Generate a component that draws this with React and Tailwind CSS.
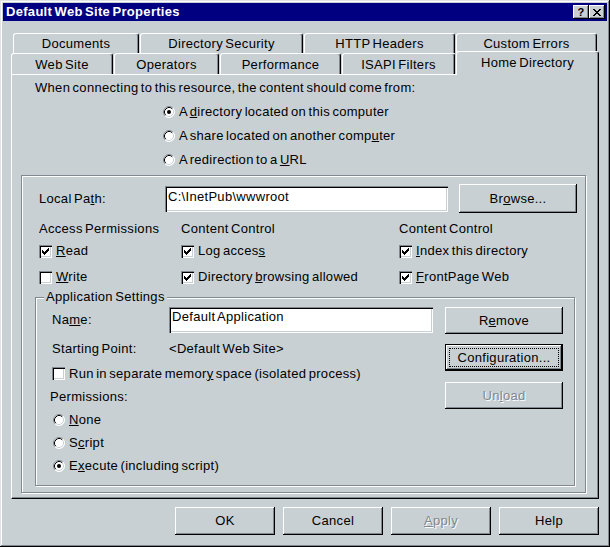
import React from "react";

// classic 3D edges
const raised = "shadow-[inset_-1px_-1px_#000,inset_1px_1px_#fff,inset_-2px_-2px_#808890]";
const sunken =
  "shadow-[inset_1px_1px_#808890,inset_2px_2px_#000,inset_-1px_-1px_#fff,inset_-2px_-2px_#c8d0d4]";
const etched = "border border-[#808890] shadow-[inset_1px_1px_#fff,1px_1px_#fff]";

const topTabs = [
  { label: "Documents", w: "w-[126px]" },
  { label: "Directory Security", w: "w-[163px]" },
  { label: "HTTP Headers", w: "w-[151px]" },
  { label: "Custom Errors", w: "w-[141px]" },
];

const bottomTabs = [
  { label: "Web Site", w: "w-[102px]" },
  { label: "Operators", w: "w-[105px]" },
  { label: "Performance", w: "w-[121px]" },
  { label: "ISAPI Filters", w: "w-[113px]" },
];

const tabEdge =
  "shrink-0 rounded-t-[3px] border-l border-t border-r border-l-white border-t-white border-r-black bg-[#c8d0d4] text-center shadow-[inset_-1px_0_#808890]";

function Button({ children, w = "w-[118px]", h = "h-[27px]", extra = "", disabled, isDefault }) {
  return (
    <div
      className={`relative flex shrink-0 items-center justify-center ${w} ${h} ${extra} ${
        isDefault ? "border border-black" : ""
      } ${raised} ${disabled ? "text-[#808890] [text-shadow:1px_1px_#fff]" : "text-black"}`}
    >
      {isDefault && (
        <span className="pointer-events-none absolute inset-[3px] border border-dotted border-black" />
      )}
      <span>{children}</span>
    </div>
  );
}

function Check({ checked }) {
  return (
    <span className={`flex h-[13px] w-[13px] shrink-0 items-center justify-center bg-white ${sunken}`}>
      {checked && (
        <svg width="7" height="7" viewBox="0 0 7 7" shapeRendering="crispEdges">
          <path
            d="M6 0h1v1h-1z M5 1h2v1h-2z M0 2h1v1h-1z M4 2h3v1h-3z M0 3h2v1h-2z M3 3h3v1h-3z M0 4h5v1h-5z M1 5h3v1h-3z M2 6h1v1h-1z"
            fill="#000"
          />
        </svg>
      )}
    </span>
  );
}

function Radio({ checked }) {
  return (
    <svg width="12" height="12" viewBox="0 0 12 12" className="shrink-0">
      <circle cx="6" cy="6" r="5.5" fill="#fff" />
      <path d="M2.11 9.89A5.5 5.5 0 0 1 9.89 2.11" fill="none" stroke="#808890" />
      <path d="M9.89 2.11A5.5 5.5 0 0 1 2.11 9.89" fill="none" stroke="#fff" />
      <path d="M2.82 9.18A4.5 4.5 0 0 1 9.18 2.82" fill="none" stroke="#000" />
      <path d="M9.18 2.82A4.5 4.5 0 0 1 2.82 9.18" fill="none" stroke="#c8d0d4" />
      {checked && <circle cx="6" cy="6" r="2" fill="#000" />}
    </svg>
  );
}

function RadioRow({ h, checked, children }) {
  return (
    <div className={`flex items-center gap-[4px] ${h}`}>
      <Radio checked={checked} />
      <span>{children}</span>
    </div>
  );
}

function CheckRow({ checked, children }) {
  return (
    <div className="flex items-center gap-[4px]">
      <Check checked={checked} />
      <span>{children}</span>
    </div>
  );
}

function TitleBtn({ children }) {
  return (
    <div className={`flex h-[14px] w-[16px] items-center justify-center bg-[#c8d0d4] ${raised}`}>
      {children}
    </div>
  );
}

export default function App() {
  return (
    <div className="h-[547px] w-[610px] bg-[#c8d0d4] p-[3px] font-['Liberation_Sans',Arial,sans-serif] text-[13px] leading-[16px] tracking-[0.3px] text-black [word-spacing:-1.5px] shadow-[inset_-1px_-1px_#000,inset_1px_1px_#dfe3e6,inset_-2px_-2px_#808890,inset_2px_2px_#fff]">
      {/* Title bar */}
      <div className="flex h-[18px] items-center justify-between bg-[#000080] pl-[3px] pr-[2px]">
        <span className="font-bold text-white">Default Web Site Properties</span>
        <div className="flex">
          <TitleBtn>
            <span className="text-[11px] font-bold leading-none">?</span>
          </TitleBtn>
          <TitleBtn>
            <svg width="8" height="7" viewBox="0 0 8 7" shapeRendering="crispEdges">
              <path
                d="M0 0h2v1h-2z M6 0h2v1h-2z M1 1h2v1h-2z M5 1h2v1h-2z M2 2h4v1h-4z M3 3h2v1h-2z M2 4h4v1h-4z M1 5h2v1h-2z M5 5h2v1h-2z M0 6h2v1h-2z M6 6h2v1h-2z"
                fill="#000"
              />
            </svg>
          </TitleBtn>
        </div>
      </div>

      <div className="mx-[8px] mt-[12px]">
        {/* Tab rows */}
        <div className="flex h-[20px] gap-[1px] pl-[2px]">
          {topTabs.map((t) => (
            <div key={t.label} className={`${tabEdge} ${t.w} h-[20px] pt-[2px]`}>
              {t.label}
            </div>
          ))}
        </div>
        <div className="flex h-[21px] items-end gap-[1px]">
          {bottomTabs.map((t) => (
            <div key={t.label} className={`${tabEdge} ${t.w} h-[21px] pt-[3px]`}>
              {t.label}
            </div>
          ))}
          <div className={`${tabEdge} relative z-10 -mb-[1px] h-[24px] w-[143px] pt-[3px]`}>
            Home Directory
          </div>
        </div>

        {/* Tab panel */}
        <div className="h-[425px] border-b border-l border-r border-t border-b-black border-l-white border-r-black border-t-white pt-[5px] shadow-[inset_-1px_-1px_#808890]">
          <p className="pl-[23px]">When connecting to this resource, the content should come from:</p>
          <div className="mt-[4px] pl-[151px]">
            <RadioRow h="h-[24px]" checked>
              A <u>d</u>irectory located on this computer
            </RadioRow>
            <RadioRow h="h-[24px]">
              A share located on another comp<u>u</u>ter
            </RadioRow>
            <RadioRow h="h-[24px]">
              A redirection to a <u>U</u>RL
            </RadioRow>
          </div>

          <div className={`ml-[9px] mt-[3px] h-[318px] w-[565px] ${etched}`}>
            <div className="mt-[8px] flex h-[29px] items-center pl-[17px]">
              <span className="w-[126px] shrink-0">
                Local Pa<u>t</u>h:
              </span>
              <div className={`h-[26px] w-[283px] shrink-0 bg-white pl-[3px] pt-[3px] ${sunken}`}>
                C:\InetPub\wwwroot
              </div>
              <Button h="h-[29px]" extra="ml-[11px]">
                Br<u>o</u>wse...
              </Button>
            </div>

            <div className="mt-[7px] grid grid-cols-[142px_218px_1fr] grid-rows-[18px_26px_26px] items-center pl-[17px]">
              <span>Access Permissions</span>
              <span>Content Control</span>
              <span>Content Control</span>
              <CheckRow checked>
                <u>R</u>ead
              </CheckRow>
              <CheckRow checked>
                Log acces<u>s</u>
              </CheckRow>
              <CheckRow checked>
                <u>I</u>ndex this directory
              </CheckRow>
              <CheckRow>
                <u>W</u>rite
              </CheckRow>
              <CheckRow checked>
                Directory <u>b</u>rowsing allowed
              </CheckRow>
              <CheckRow checked>
                <u>F</u>rontPage Web
              </CheckRow>
            </div>

            {/* Application Settings group */}
            <div className={`relative ml-[13px] mt-[7px] h-[189px] w-[540px] ${etched}`}>
              <span className="absolute left-[8px] top-[-9px] bg-[#c8d0d4] px-[2px]">Application Settings</span>
              <div className="flex pl-[16px] pt-[9px]">
                <div className="flex w-[381px] flex-col">
                  <div className="flex h-[26px] items-center">
                    <span className="w-[117px] shrink-0">
                      Na<u>m</u>e:
                    </span>
                    <div className={`h-[26px] w-[264px] shrink-0 bg-white pl-[3px] pt-[2px] ${sunken}`}>
                      Default Application
                    </div>
                  </div>
                  <div className="mt-[4px] flex h-[24px] items-center">
                    <span className="w-[117px] shrink-0">Starting Point:</span>
                    <span>&lt;Default Web Site&gt;</span>
                  </div>
                  <div className="flex h-[25px] items-center gap-[4px]">
                    <Check />
                    <span>
                      Run in separate memor<u>y</u> space (isolated process)
                    </span>
                  </div>
                  <div className="-ml-[2px] flex h-[22px] items-center">Permissions:</div>
                  <div className="ml-[1px]">
                    <RadioRow h="h-[23px]">
                      <u>N</u>one
                    </RadioRow>
                    <RadioRow h="h-[23px]">
                      S<u>c</u>ript
                    </RadioRow>
                    <RadioRow h="h-[23px]" checked>
                      E<u>x</u>ecute (including script)
                    </RadioRow>
                  </div>
                </div>
                <div className="ml-[12px] flex w-[118px] flex-col">
                  <Button>
                    R<u>e</u>move
                  </Button>
                  <Button extra="mt-[10px]" isDefault>
                    Confi<u>g</u>uration...
                  </Button>
                  <Button extra="mt-[11px]" disabled>
                    Un<u>l</u>oad
                  </Button>
                </div>
              </div>
            </div>
          </div>
        </div>

        {/* Dialog buttons */}
        <div className="mt-[8px] flex justify-end gap-[8px]">
          <Button w="w-[100px]" h="h-[28px]">
            OK
          </Button>
          <Button w="w-[100px]" h="h-[28px]">
            Cancel
          </Button>
          <Button w="w-[100px]" h="h-[28px]" disabled>
            <u>A</u>pply
          </Button>
          <Button w="w-[100px]" h="h-[28px]">
            Help
          </Button>
        </div>
      </div>
    </div>
  );
}
